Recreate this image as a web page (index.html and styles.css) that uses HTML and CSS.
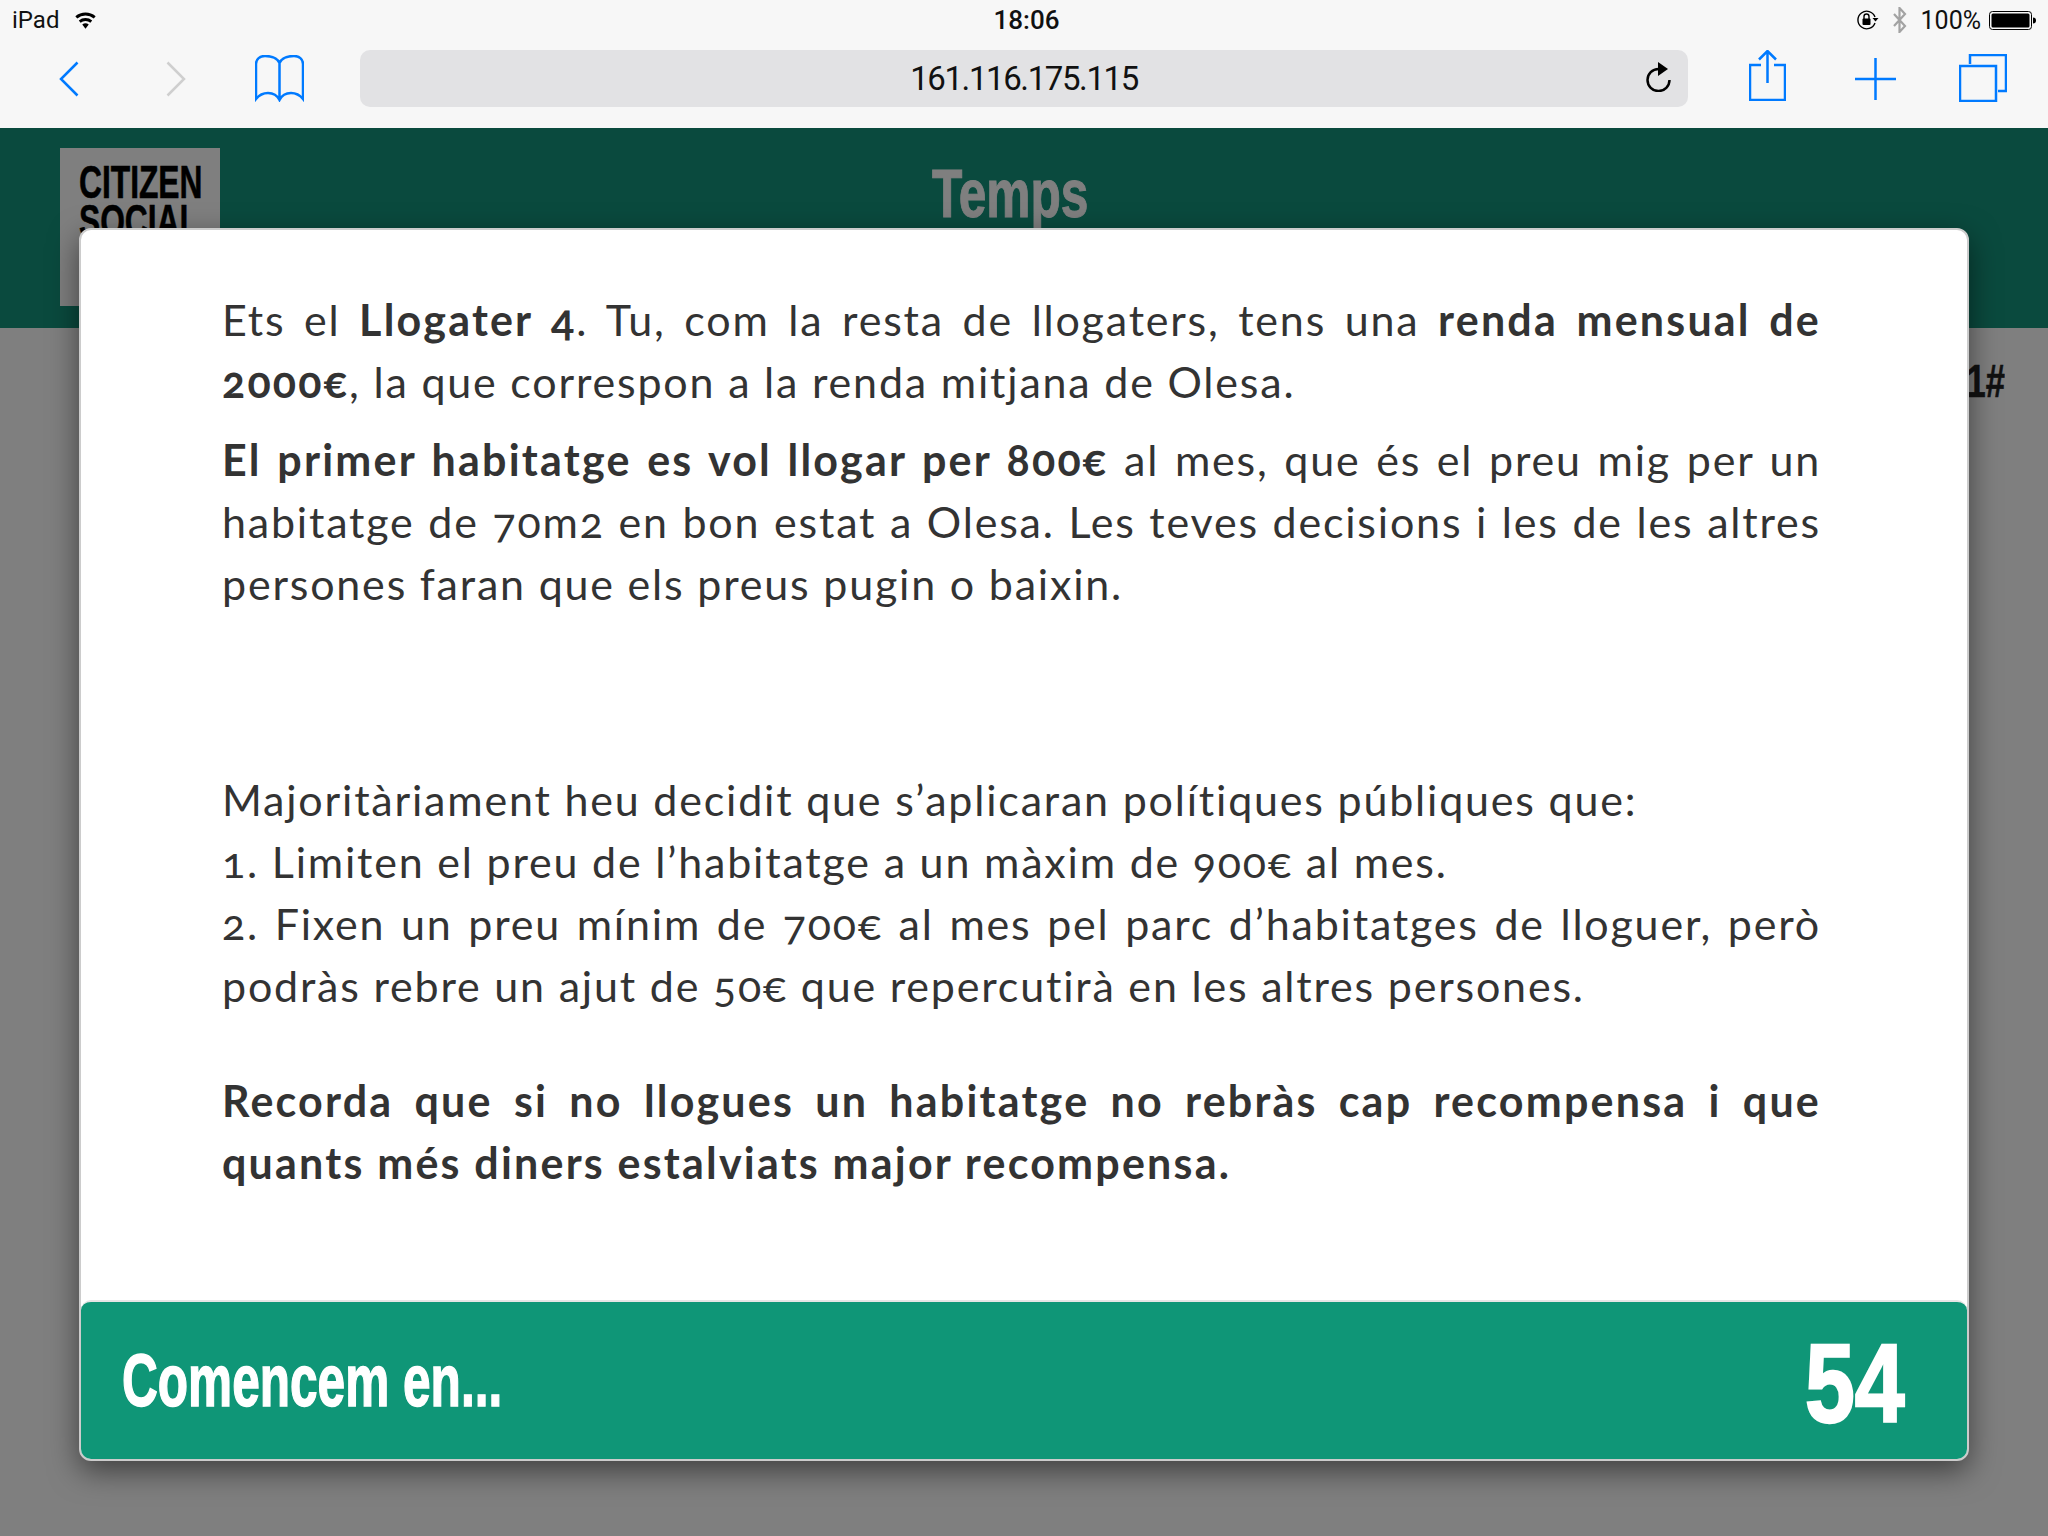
FILE: index.html
```html
<!DOCTYPE html>
<html lang="en">
<head>
  <meta charset="UTF-8">
  <title>Temps</title>
  <link rel="stylesheet" href="styles.css">
</head>
<body>
  <div class="chrome">
    <div class="status">
      <div class="status-left">
        <span>iPad</span>
        <svg class="wifi" viewBox="0 0 24 18"><path d="M12 18 8.600 13.800a5.400 5.400 0 0 1 6.800 0zM6.900 11.800 5 9.500a11 11 0 0 1 14 0l-1.900 2.300a8 8 0 0 0-10.200 0zM3.400 7.500 1.400 5a16.700 16.700 0 0 1 21.200 0l-2 2.500a13.500 13.500 0 0 0-17.200 0z"/></svg>
      </div>
      <span class="clock">18:06</span>
      <div class="status-right">
        <svg class="lock" viewBox="0 0 22 20"><path d="M18 7A8.800 8.800 0 1 0 18 13" fill="none" stroke="#000" stroke-width="1.400"/><path d="M15.500 8h6l-3 3.500z"/><rect x="5.500" y="8.500" width="8" height="6.500" rx="1"/><path d="M7 9V6.500a2.500 2.500 0 0 1 5 0V9" fill="none" stroke="#000" stroke-width="1.400"/></svg>
        <svg class="bt" viewBox="0 0 15 26"><path d="M2 7l11 12-5.500 6V1L13 7 2 19" fill="none" stroke="#a3a3a3" stroke-width="2.200"/></svg>
        <span class="battery-level">100%</span>
        <svg class="battery" viewBox="0 0 47 19"><rect x=".5" y=".5" width="42" height="18" rx="3" fill="none" stroke="#000"/><rect x="2.500" y="2.500" width="38" height="14" rx="1.500"/><path d="M44 6.500c2 0 3 1 3 3s-1 3-3 3z"/></svg>
      </div>
    </div>
    <div class="toolbar">
      <div class="nav-icons">
        <svg class="ico-back" viewBox="0 0 20 36"><path d="M18.500 1.500 2 18l16.500 16.500"/></svg>
        <svg class="ico-forward" viewBox="0 0 20 36"><path d="M1.500 1.500 18 18 1.500 34.500"/></svg>
        <svg class="ico-book" viewBox="0 0 49 47"><path d="M24.500 8C22 2.500 16 1 10 1 5 1 1 4 1 9v35C5 39 9 38 13 38c5 0 9 2 11.500 7C27 40 31 38 36 38c4 0 8 1 12 6V9c0-5-4-8-9-8-6 0-12 1.500-14.500 7zm0 0v37"/></svg>
      </div>
      <div class="url-bar">
        <span>161.116.175.115</span>
        <svg class="ico-reload" viewBox="0 0 26 30"><path d="M13.500 7A11 11 0 1 0 24.500 18" fill="none" stroke="#000" stroke-width="2.800"/><path d="M13 0l10 7-10 7z"/></svg>
      </div>
      <div class="action-icons">
        <svg class="ico-share" viewBox="0 0 37 51"><path d="M12 15H1v35h35V15H25M18.500 33V1M10 9.500l8.500-8.500L27 9.500"/></svg>
        <svg class="ico-plus" viewBox="0 0 41 42"><path d="M20.500 0v42M0 21h41"/></svg>
        <svg class="ico-tabs" viewBox="0 0 48 48"><path d="M11 10V1h36v36h-8"/><rect x="1" y="12" width="36" height="35"/></svg>
      </div>
    </div>
  </div>

  <div class="page">
    <header class="page-header">
      <div class="logo"><span class="logo-text">CITIZEN<br>SOCIAL</span></div>
      <h1 class="page-title">Temps</h1>
    </header>
    <div class="round-label">1#</div>

    <div class="overlay"></div>
    <div class="modal">
      <div class="modal-body">
        <p>
          <span class="line full">Ets el <b>Llogater 4</b>. Tu, com la resta de llogaters, tens una <b>renda mensual de</b></span>
          <span class="line"><b>2000€</b>, la que correspon a la renda mitjana de Olesa.</span>
        </p>
        <p>
          <span class="line full"><b>El primer habitatge es vol llogar per 800€</b> al mes, que és el preu mig per un</span>
          <span class="line full">habitatge de 70m2 en bon estat a Olesa. Les teves decisions i les de les altres</span>
          <span class="line">persones faran que els preus pugin o baixin.</span>
        </p>
        <p class="rules">
          <span class="line">Majoritàriament heu decidit que s’aplicaran polítiques públiques que:</span>
          <span class="line">1. Limiten el preu de l’habitatge a un màxim de 900€ al mes.</span>
          <span class="line full">2. Fixen un preu mínim de 700€ al mes pel parc d’habitatges de lloguer, però</span>
          <span class="line">podràs rebre un ajut de 50€ que repercutirà en les altres persones.</span>
        </p>
        <p class="reminder">
          <b>
            <span class="line full">Recorda que si no llogues un habitatge no rebràs cap recompensa i que</span>
            <span class="line">quants més diners estalviats major recompensa.</span>
          </b>
        </p>
      </div>
      <div class="modal-footer">
        <span class="start-label">Comencem en...</span>
        <span class="countdown">54</span>
      </div>
    </div>
  </div>
</body>
</html>
```

FILE: styles.css
```css
* {
  box-sizing: border-box;
}
body {
  margin: 0;
  width: 2048px;
  height: 1536px;
  overflow: hidden;
  font-family: "Open Sans", sans-serif;
  background: #fff;
}
svg {
  display: block;
  flex: none;
}

/* browser chrome */
.chrome {
  height: 128px;
  background: #f7f7f7;
}
.status {
  height: 40px;
  padding: 0 12px;
  display: grid;
  grid-template-columns: 1fr auto 1fr;
  align-items: center;
  font-family: Roboto, sans-serif;
  font-size: 24px;
  color: #111;
}
.status-left {
  display: flex;
  align-items: center;
  gap: 15px;
}
.status-right {
  display: flex;
  align-items: center;
  justify-content: flex-end;
  gap: 8px;
}
.clock {
  margin-left: 5px;
  font-weight: 500;
  font-size: 26px;
}
.battery-level {
  font-size: 25px;
}
.wifi {
  width: 23px;
  height: 18px;
}
.lock {
  width: 22px;
  height: 20px;
  margin-right: 5px;
}
.bt {
  width: 15px;
  height: 26px;
  margin-right: 6px;
}
.battery {
  width: 47px;
  height: 19px;
}
.toolbar {
  height: 88px;
  padding: 10px 41px 21px 59px;
  display: flex;
  align-items: center;
}
.toolbar svg path,
.toolbar svg rect {
  fill: none;
  stroke: #007aff;
  stroke-width: 2.500;
}
.nav-icons {
  width: 301px;
  display: flex;
  align-items: center;
}
.ico-back,
.ico-forward {
  width: 20px;
  height: 36px;
}
.ico-forward {
  margin-left: 87px;
}
.toolbar .ico-forward path {
  stroke: #cfcfcf;
}
.ico-book {
  width: 49px;
  height: 47px;
  margin-left: 69px;
}
.url-bar {
  width: 1328px;
  height: 57px;
  padding: 0 16px;
  border-radius: 10px;
  background: #e2e2e4;
  display: flex;
  align-items: center;
  justify-content: center;
  position: relative;
  font-family: Roboto, sans-serif;
  font-size: 33px;
  letter-spacing: -1.400px;
  color: #111;
}
.toolbar .ico-reload {
  width: 26px;
  height: 30px;
  position: absolute;
  right: 17px;
  top: 12px;
}
.toolbar .ico-reload path:first-child {
  stroke: #000;
}
.toolbar .ico-reload path:last-child {
  fill: #000;
  stroke: none;
}
.action-icons {
  display: flex;
  align-items: center;
  margin-left: 61px;
}
.ico-share {
  width: 37px;
  height: 51px;
  margin-top: -6px;
}
.ico-plus {
  width: 41px;
  height: 42px;
  margin-left: 69px;
}
.ico-tabs {
  width: 48px;
  height: 48px;
  margin-left: 63px;
  margin-top: -2px;
}

/* game page, dimmed by the overlay */
.page {
  position: relative;
  height: 1408px;
  background: #fff;
}
.page-header {
  height: 200px;
  padding: 20px 60px 0;
  background: #14947c;
  display: flex;
  align-items: flex-start;
}
.logo {
  width: 160px;
  height: 158px;
  padding: 15px 0 0 19px;
  background: #fff;
  font-family: "Liberation Sans", sans-serif;
  font-weight: 700;
  font-size: 46px;
  line-height: 39px;
  color: #000;
}
.logo-text {
  display: block;
  width: 200px;
  -webkit-text-stroke: 0.6px #000;
  transform: scaleX(0.69);
  transform-origin: left;
}
.page-title {
  margin: 0 0 0 712px;
  font-family: "Liberation Sans", sans-serif;
  font-weight: 700;
  font-size: 68px;
  line-height: 90px;
  color: #fff;
  -webkit-text-stroke: 1px #fff;
  transform: scaleX(0.73);
  transform-origin: left;
}
.round-label {
  margin: 26px 43px 0 0;
  text-align: right;
  font-family: "Liberation Sans", sans-serif;
  font-weight: 700;
  font-size: 46px;
  color: #222;
  -webkit-text-stroke: 0.6px #222;
  transform: scaleX(0.75);
  transform-origin: right;
}
.overlay {
  position: absolute;
  inset: 0;
  background: rgba(0, 0, 0, 0.5);
}

/* modal */
.modal {
  position: absolute;
  left: 79px;
  top: 100px;
  width: 1890px;
  height: 1233px;
  display: flex;
  flex-direction: column;
  background: #fff;
  border: 2px solid #ccc;
  border-radius: 12px;
  box-shadow: 0 10px 30px rgba(0, 0, 0, 0.5);
}
.modal-body {
  flex: 1;
  padding: 59px 146px 0 141px;
  font-family: Lato, sans-serif;
  font-size: 43px;
  line-height: 62px;
  letter-spacing: 1.800px;
  font-variant-numeric: oldstyle-nums;
  color: #333;
}
.modal-body b {
  letter-spacing: 2.200px;
}
.modal-body p {
  margin: 0 0 16px;
}
.modal-body p.rules {
  margin-top: 154px;
  margin-bottom: 53px;
}
.line {
  display: block;
}
.line.full {
  text-align: justify;
  text-align-last: justify;
}
.modal-footer {
  height: 159px;
  padding: 0 62px 0 41px;
  display: flex;
  align-items: center;
  justify-content: space-between;
  background: #0f9677;
  border-top: 2px solid #e5e5e5;
  border-radius: 10px;
  font-family: "Liberation Sans", sans-serif;
  font-weight: 700;
  color: #fff;
}
.start-label {
  font-size: 74px;
  -webkit-text-stroke: 1.500px #fff;
  transform: scaleX(0.67);
  transform-origin: left;
}
.countdown {
  margin-top: 6px;
  font-size: 112px;
  -webkit-text-stroke: 2.500px #fff;
  transform: scaleX(0.8);
  transform-origin: right;
}
```
